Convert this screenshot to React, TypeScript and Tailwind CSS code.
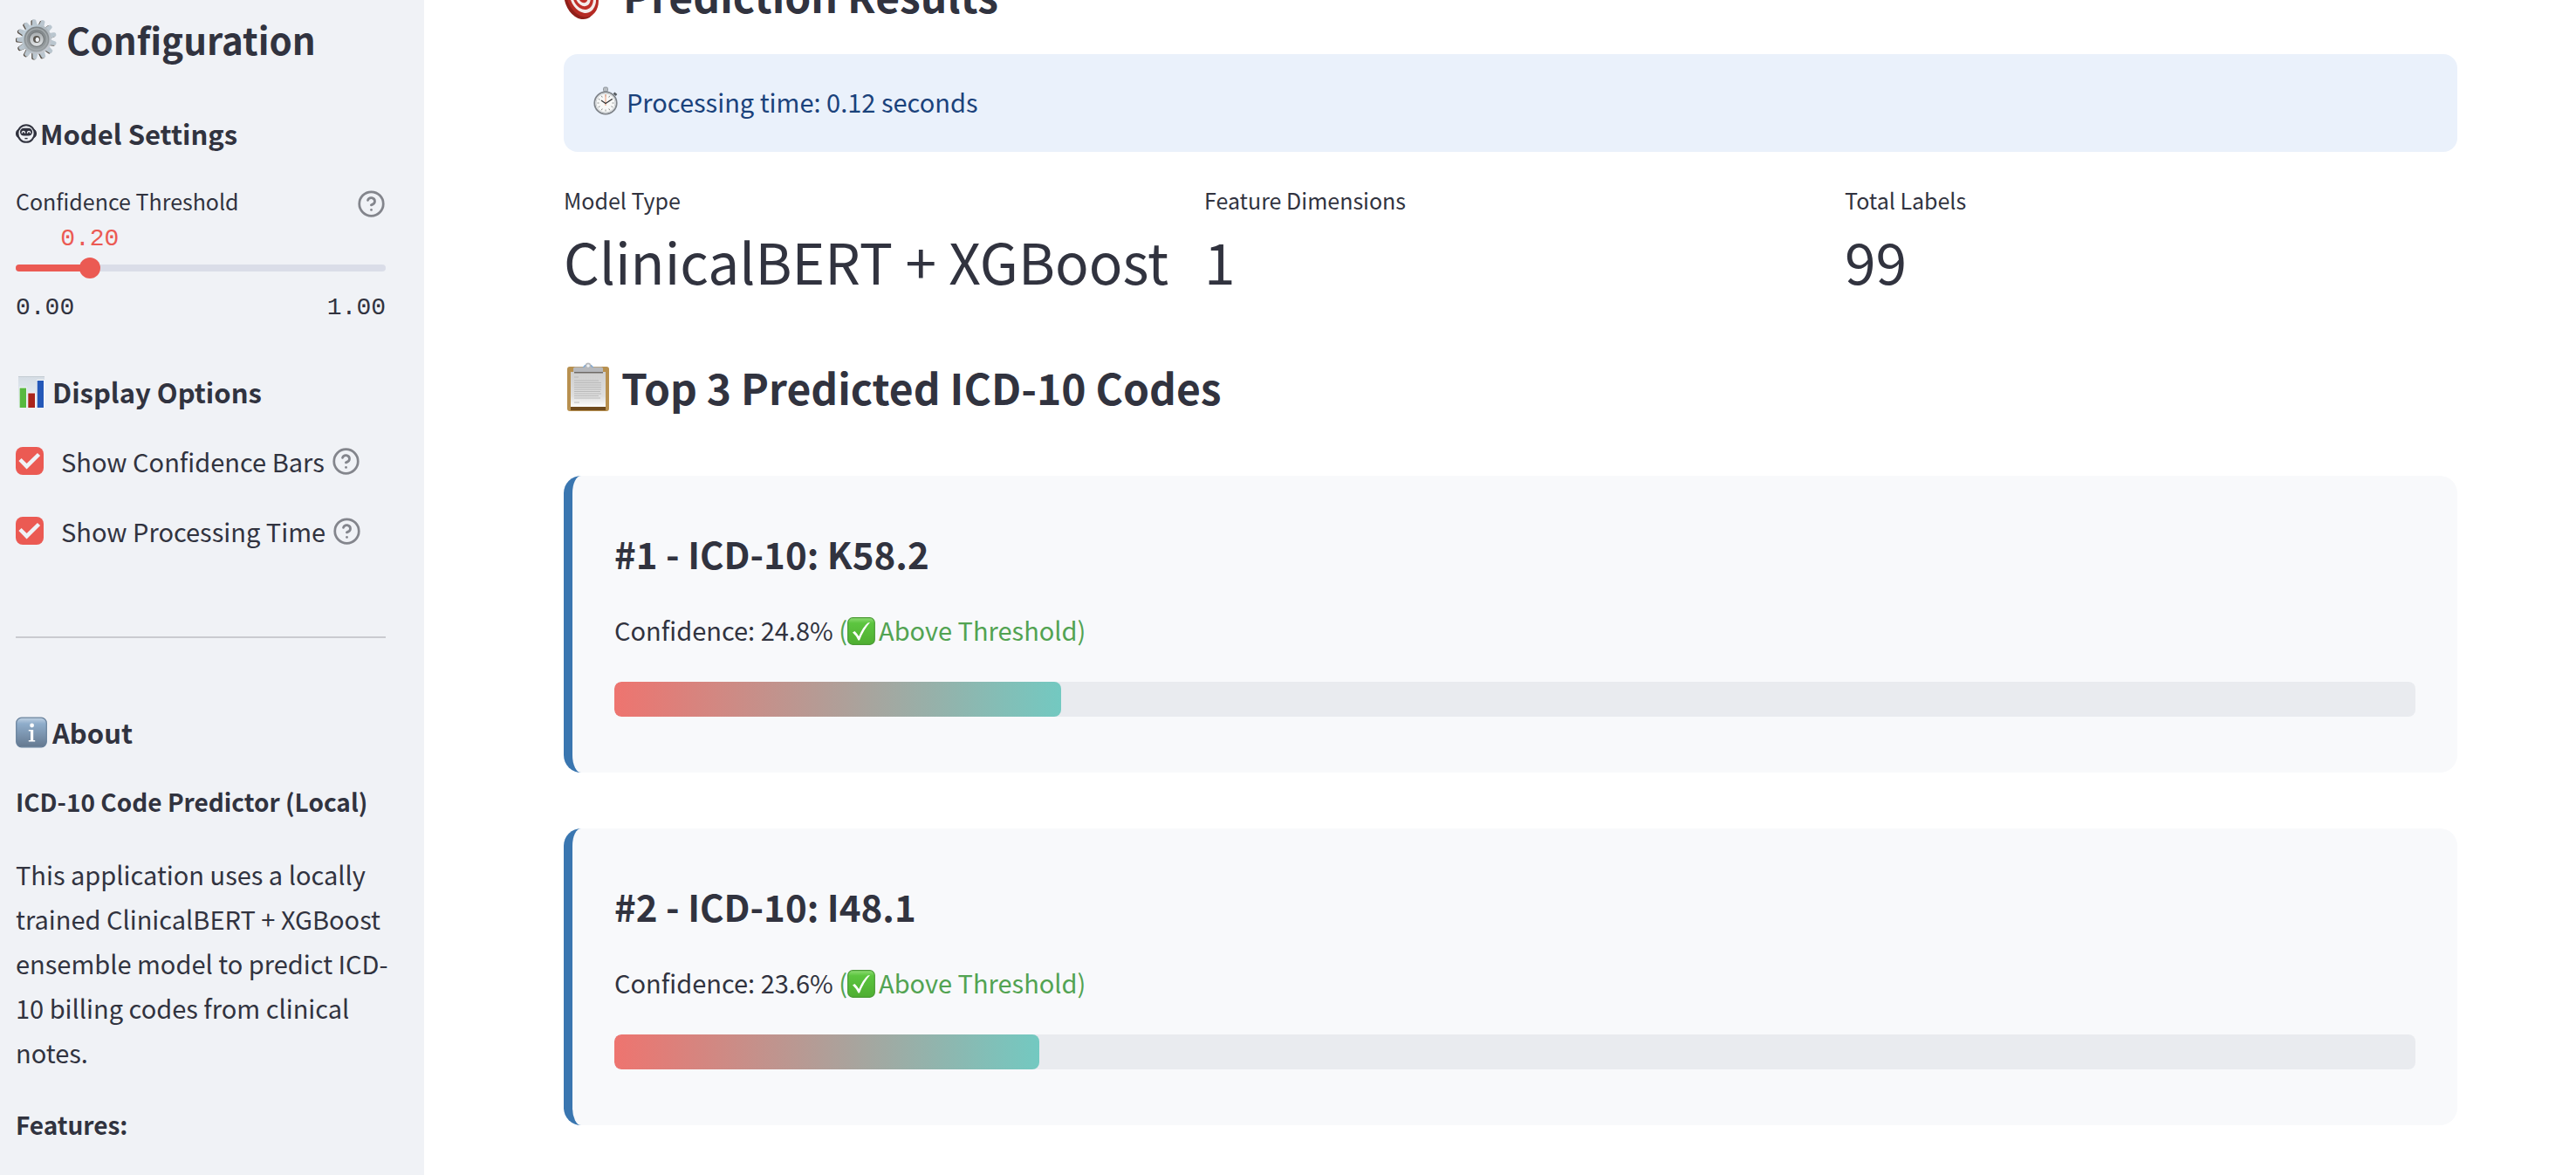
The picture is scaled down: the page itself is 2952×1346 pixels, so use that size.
import { useState, type ReactNode } from "react";

const SANS = "font-['Noto_Sans_CJK_SC','Noto_Sans',sans-serif]";

function Gear() {
  return (
    <svg viewBox="0 0 48 48" className="size-12 shrink-0" aria-hidden="true">
      <defs>
        <linearGradient id="gearBody" x1="0" y1="0" x2="1" y2="1">
          <stop offset="0" stopColor="#c9dae6" />
          <stop offset="0.5" stopColor="#aeb7bd" />
          <stop offset="1" stopColor="#d0d2da" />
        </linearGradient>
        <linearGradient id="gearRing" x1="0" y1="0" x2="0" y2="1">
          <stop offset="0" stopColor="#7d8386" />
          <stop offset="1" stopColor="#9ba1a4" />
        </linearGradient>
        <linearGradient id="gearHub" x1="0" y1="0" x2="0" y2="1">
          <stop offset="0" stopColor="#a6abae" />
          <stop offset="1" stopColor="#e1e4e6" />
        </linearGradient>
      </defs>
      <g fill="#5a5148">
        {Array.from({ length: 13 }, (_, i) => (
          <path key={i} d="M20.8 10 21.6 2.200Q22 1 24 1t2.400 1.200L27.200 10Z" transform={`translate(-1.200 .6) rotate(${(i * 360) / 13 - 8} 24 24)`} />
        ))}
      </g>
      <g fill="#bac6cf">
        {Array.from({ length: 13 }, (_, i) => (
          <path key={i} d="M20.600 10 21.800 2Q22.200 1 24 1t2.200 1L27.400 10Z" transform={`rotate(${(i * 360) / 13 - 8} 24 24)`} />
        ))}
      </g>
      <circle cx="24" cy="24" r="17" fill="url(#gearBody)" />
      <circle cx="24" cy="24" r="14.500" fill="url(#gearRing)" />
      <circle cx="24" cy="24" r="12" fill="none" stroke="#a3a9ac" strokeWidth="1.600" />
      <circle cx="24" cy="24" r="9" fill="#74797b" />
      <circle cx="24" cy="24" r="7.800" fill="url(#gearHub)" />
      <circle cx="24" cy="24" r="4" fill="#5c5852" />
      <ellipse cx="24.800" cy="24.400" rx="2.200" ry="2.600" fill="#f0f2f6" />
    </svg>
  );
}

function Robot() {
  return (
    <svg viewBox="0 0 24 24" className="size-6 shrink-0" fill="none" stroke="#31333f" aria-hidden="true">
      <ellipse cx="12" cy="12" rx="9.600" ry="9.800" strokeWidth="2" />
      <path d="M2.400 7.600C-.2 9.600-.2 14.400 2.400 16.400ZM21.600 7.600c2.600 2 2.600 6.800 0 8.800Z" fill="#31333f" strokeWidth="1" />
      <rect x="5" y="5.800" width="14" height="8.800" rx="4.200" fill="#31333f" stroke="none" />
      <path d="M7.200 11.600c.2-3 3.200-3 3.400 0M13.400 11.600c.2-3 3.200-3 3.400 0" stroke="#f0f2f6" strokeWidth="1.300" />
      <path d="M10.400 17.600h3.200" strokeWidth="1.400" />
    </svg>
  );
}

function BarChart() {
  return (
    <svg viewBox="0 0 36 36" className="size-9 shrink-0" aria-hidden="true">
      <defs>
        <linearGradient id="chartBack" x1="0" y1="0" x2="0" y2="1">
          <stop offset="0" stopColor="#d5dde5" />
          <stop offset="1" stopColor="#eaf1f8" />
        </linearGradient>
      </defs>
      <rect x="3" width="30" height="36" fill="url(#chartBack)" />
      <path d="M3 .5h30" stroke="#c3cbd2" />
      <path d="M4 12.5h8.5V36H4zM14 18.5h8.5V36H14zM24 4h9v32h-9z" fill="#fff" opacity=".8" />
      <path d="M4.600 13.5H12V36H4.600z" fill="#58b93f" />
      <path d="M14.300 19.500H22V36h-7.700z" fill="#ab251c" />
      <path d="M24.700 5H32v31h-7.300z" fill="#2458b8" />
    </svg>
  );
}

function InfoTile() {
  return (
    <svg viewBox="0 0 36 36" className="size-9 shrink-0" aria-hidden="true">
      <defs>
        <linearGradient id="infoTile" x1="0" y1="0" x2="0" y2="1">
          <stop offset="0" stopColor="#c2d3e4" />
          <stop offset="0.2" stopColor="#8fadcb" />
          <stop offset="1" stopColor="#64788f" />
        </linearGradient>
      </defs>
      <rect x=".7" y="1.2" width="34.600" height="33.600" rx="6" fill="url(#infoTile)" stroke="#67809b" strokeWidth="1.2" />
      <circle cx="18.600" cy="10" r="2.400" fill="#fff" />
      <path d="M14.800 15h5.400v12h2v1.600h-7.400V27h2.200V16.600h-2.200z" fill="#fff" />
    </svg>
  );
}

function Target() {
  return (
    <svg viewBox="0 0 54 54" className="size-[54px] shrink-0 overflow-visible" aria-hidden="true">
      <g transform="rotate(-20 22 29)">
        <ellipse cx="18" cy="30.500" rx="17.500" ry="24" fill="#8f1f19" />
        <ellipse cx="21.500" cy="29" rx="17.500" ry="24" fill="#b52a24" />
        <ellipse cx="22" cy="28.500" rx="14.500" ry="20" fill="#f4eceb" />
        <ellipse cx="22" cy="28.500" rx="11.500" ry="16" fill="#c0302a" />
        <ellipse cx="22" cy="28.500" rx="8.500" ry="12" fill="#f4eceb" />
        <ellipse cx="22" cy="28.500" rx="5.500" ry="8" fill="#c0302a" />
      </g>
    </svg>
  );
}

function Stopwatch() {
  return (
    <svg viewBox="0 0 28 34" className="h-[34px] w-7 shrink-0" aria-hidden="true">
      <rect x="11.500" y="1" width="5" height="5" rx="1.500" fill="#b9bec3" stroke="#7f868c" strokeWidth=".8" />
      <path d="m23.500 7.500 3 2.500" stroke="#555b60" strokeWidth="2.600" />
      <circle cx="14" cy="19" r="12.700" fill="#f7f8f7" stroke="#7e8389" strokeWidth="1.800" />
      <circle cx="14" cy="19" r="11" fill="none" stroke="#cdd1d4" />
      {Array.from({ length: 12 }, (_, i) => (
        <path key={i} d="M14 9.500v2" stroke="#77797b" strokeWidth=".8" transform={`rotate(${i * 30} 14 19)`} />
      ))}
      <path d="M14 22V9" stroke="#f0ab8c" strokeWidth="1.200" />
      <path d="m9 16 5 3.500 7.500-5" stroke="#333" strokeWidth="1.200" fill="none" />
    </svg>
  );
}

function Clipboard() {
  return (
    <svg viewBox="0 0 52 60" className="ml-0.5 h-[60px] w-[52px] shrink-0" aria-hidden="true">
      <defs>
        <linearGradient id="sheet" x1="0" y1="0" x2="0" y2="1">
          <stop offset="0" stopColor="#cfcfcf" />
          <stop offset="0.7" stopColor="#dedede" />
          <stop offset="1" stopColor="#fcfcfc" />
        </linearGradient>
      </defs>
      <rect x="2" y="7" width="48" height="51" rx="3" fill="#b8904f" />
      <path d="M6 53h40v4H6z" fill="#6e4a1d" />
      <path d="M6 13h40v40H6z" fill="url(#sheet)" />
      <path d="M9 13V9q0-1.500 2-1.500h9q2 0 2.600-2.500a3.600 3.600 0 0 1 6.800 0q.6 2.500 2.600 2.500h9q2 0 2 1.500v4z" fill="#b6b8bc" />
      <path d="M20 7.500q2 0 2.600-2.500M32 7.500q-2 0-2.600-2.500" stroke="#7fa6cf" strokeWidth="1.200" fill="none" />
      <circle cx="26" cy="6" r="1.800" fill="#eef1f4" />
      <path d="M10 13h33v1.500H10z" fill="#6f6a66" />
      <path
        d="M10 19h5M10 23h28M10 25.500h31M10 28h31M10 30.500h31M10 33h31M10 35.500h30M10 38h31M10 40.500h28M10 43h30M10 48h6"
        stroke="#bababa"
        strokeWidth="1"
      />
    </svg>
  );
}

function CheckTile() {
  return (
    <svg viewBox="0 0 32 32" className="mr-1 inline-block size-8 align-[-5px]" aria-hidden="true">
      <defs>
        <linearGradient id="checkTile" x1="0" y1="0" x2="0" y2="1">
          <stop offset="0" stopColor="#8fdc74" />
          <stop offset="0.2" stopColor="#5cc53f" />
          <stop offset="1" stopColor="#4fae31" />
        </linearGradient>
      </defs>
      <rect x=".7" y=".7" width="30.600" height="30.600" rx="5.500" fill="url(#checkTile)" stroke="#4a9a35" strokeWidth="1.200" />
      <path d="M6 17.500 8.500 16q3 3 4.700 6Q18 11 23.500 6.500L26 6q-7.500 8.500-12 20.500h-1.500Q10 21 6 17.500Z" fill="#fff" />
    </svg>
  );
}

function HelpButton({ label }: { label: string }) {
  return (
    <button type="button" aria-label={label} className="shrink-0 cursor-help">
      <svg viewBox="0 0 24 24" className="block size-[33px]" fill="none" stroke="#83858c" strokeWidth="2" strokeLinecap="round" strokeLinejoin="round" aria-hidden="true">
        <circle cx="12" cy="12" r="10" />
        <path d="M9.090 9a3 3 0 0 1 5.830 1c0 2-3 3-3 3" />
        <path d="M12 17h.010" />
      </svg>
    </button>
  );
}

function SectionTitle({ icon, gap, children }: { icon: ReactNode; gap: string; children: ReactNode }) {
  return (
    <h3 className={`flex items-center text-[31px] leading-[44px] font-bold ${gap}`}>
      {icon}
      {children}
    </h3>
  );
}

function CheckOption({ id, label }: { id: string; label: string }) {
  const [checked, setChecked] = useState(true);
  return (
    <div className="flex items-center">
      <span className="relative mr-5 size-8 shrink-0">
        <input
          id={id}
          type="checkbox"
          checked={checked}
          onChange={(e) => setChecked(e.target.checked)}
          className="peer block size-8 appearance-none rounded-lg border-2 border-gray-300 bg-white checked:border-transparent checked:bg-[#eb5a53] checked:bg-origin-border"
        />
        <svg viewBox="0 0 32 32" className="pointer-events-none absolute inset-0 hidden peer-checked:block" fill="none" stroke="#f0f2f6" strokeWidth="4.500" aria-hidden="true">
          <path d="m5 14.500 7.600 7.700L26.500 8.500" />
        </svg>
      </span>
      <label htmlFor={id} className="mr-2 text-[29px] leading-12 whitespace-nowrap">
        {label}
      </label>
      <HelpButton label={`Help: ${label}`} />
    </div>
  );
}

function Sidebar() {
  const [value, setValue] = useState(0.2);
  const percent = `${value * 100}%`;
  return (
    <aside className="w-[486px] shrink-0 bg-[#f0f2f6] pt-4 pr-11 pl-[18px]">
      <h2 className="flex items-center gap-2.5 text-[42px] leading-[58px] font-bold">
        <Gear />
        Configuration
      </h2>

      <div className="mt-[57px]">
        <SectionTitle icon={<Robot />} gap="gap-1">Model Settings</SectionTitle>
      </div>
      <div className="mt-[35px] flex items-end justify-between">
        <label htmlFor="threshold" className="text-[25px] leading-10">
          Confidence Threshold
        </label>
        <HelpButton label="Help: Confidence Threshold" />
      </div>
      <div className="mt-1.5 font-['Liberation_Mono',monospace] text-[28px] leading-9">
        <div className="h-9 text-[#eb5a53]">
          <output htmlFor="threshold" className="relative inline-block -translate-x-1/2" style={{ left: percent }}>
            {value.toFixed(2)}
          </output>
        </div>
        <div className="relative mt-[3px] flex h-6 items-center">
          <div className="h-2 w-full overflow-hidden rounded-full bg-[#dadde8]">
            <div className="h-full bg-[#eb5a53]" style={{ width: percent }} />
          </div>
          <input
            id="threshold"
            type="range"
            min={0}
            max={1}
            step={0.05}
            value={value}
            onChange={(e) => setValue(Number(e.target.value))}
            className="absolute inset-y-0 -left-3 h-6 w-[calc(100%+24px)] appearance-none bg-transparent [&::-moz-range-thumb]:size-6 [&::-moz-range-thumb]:rounded-full [&::-moz-range-thumb]:border-0 [&::-moz-range-thumb]:bg-[#eb5a53] [&::-webkit-slider-thumb]:size-6 [&::-webkit-slider-thumb]:appearance-none [&::-webkit-slider-thumb]:rounded-full [&::-webkit-slider-thumb]:bg-[#eb5a53]"
          />
        </div>
        <div className="mt-4 flex justify-between">
          <span>0.00</span>
          <span>1.00</span>
        </div>
      </div>

      <div className="mt-14">
        <SectionTitle icon={<BarChart />} gap="gap-1.5">Display Options</SectionTitle>
      </div>
      <div className="mt-[33px] flex flex-col gap-8">
        <CheckOption id="bars" label="Show Confidence Bars" />
        <CheckOption id="time" label="Show Processing Time" />
      </div>

      <hr className="mt-[97px] border-t-2 border-[#cacbd0]" />

      <div className="mt-[86px]">
        <SectionTitle icon={<InfoTile />} gap="gap-1.5">About</SectionTitle>
      </div>
      <div className="mt-8 flex flex-col gap-8 text-[29px] leading-[51px]">
        <p className="text-[28px] font-bold whitespace-nowrap">ICD-10 Code Predictor (Local)</p>
        <p className="-mr-3">
          This application uses a locally trained ClinicalBERT + XGBoost ensemble model to predict ICD-
          <wbr />
          10 billing codes from clinical notes.
        </p>
        <p className="text-[28px] font-bold">Features:</p>
      </div>
    </aside>
  );
}

const metrics = [
  { label: "Model Type", value: "ClinicalBERT + XGBoost" },
  { label: "Feature Dimensions", value: "1" },
  { label: "Total Labels", value: "99" },
];

const predictions = [
  { rank: 1, code: "K58.2", confidence: 24.8 },
  { rank: 2, code: "I48.1", confidence: 23.6 },
];

function PredictionCard({ rank, code, confidence }: { rank: number; code: string; confidence: number }) {
  return (
    <article className="rounded-[20px] border-l-10 border-[#3a76b0] bg-[#f8f9fb] px-12 pt-15 pb-16">
      <h3 className="text-[42px] leading-[58px] font-bold">
        #{rank} - ICD-10: {code}
      </h3>
      <p className="mt-[34px] text-[29px] leading-12">
        Confidence: {confidence.toFixed(1)}%{" "}
        <span className="text-[#52a352]">
          (<CheckTile />
          Above Threshold)
        </span>
      </p>
      <div className="mt-9 h-10 overflow-hidden rounded-lg bg-[#e9ebef]">
        <div
          className="h-full rounded-lg bg-linear-[90deg,#ee746f,#73c9c1]"
          style={{ width: `${confidence}%` }}
        />
      </div>
    </article>
  );
}

export default function App() {
  return (
    <div className={`flex h-screen overflow-hidden bg-white text-[#31333f] ${SANS}`}>
      <Sidebar />
      <main className="min-w-0 flex-1 pr-34 pl-40">
        <h2 className="-mt-10 flex items-center gap-3.5 text-[48px] leading-[68px] font-bold">
          <Target />
          Prediction Results
        </h2>
        <div role="status" className="mt-[34px] flex items-center gap-2.5 rounded-2xl bg-[#eaf1fb] px-[34px] pt-[30px] pb-[34px] text-[29px] leading-12 text-[#1a427b]">
          <Stopwatch />
          <p>Processing time: 0.12 seconds</p>
        </div>
        <dl className="mt-[35px] grid grid-cols-3 gap-8">
          {metrics.map((m) => (
            <div key={m.label}>
              <dt className="text-[25px] leading-10">{m.label}</dt>
              <dd className="mt-1.5 text-[64px] leading-[86px] whitespace-nowrap">{m.value}</dd>
            </div>
          ))}
        </dl>
        <h2 className="mt-[68px] flex items-center gap-3 text-[48px] leading-[68px] font-bold">
          <Clipboard />
          Top 3 Predicted ICD-10 Codes
        </h2>
        <div className="mt-[68px] flex flex-col gap-16">
          {predictions.map((p) => (
            <PredictionCard key={p.rank} {...p} />
          ))}
        </div>
      </main>
    </div>
  );
}
